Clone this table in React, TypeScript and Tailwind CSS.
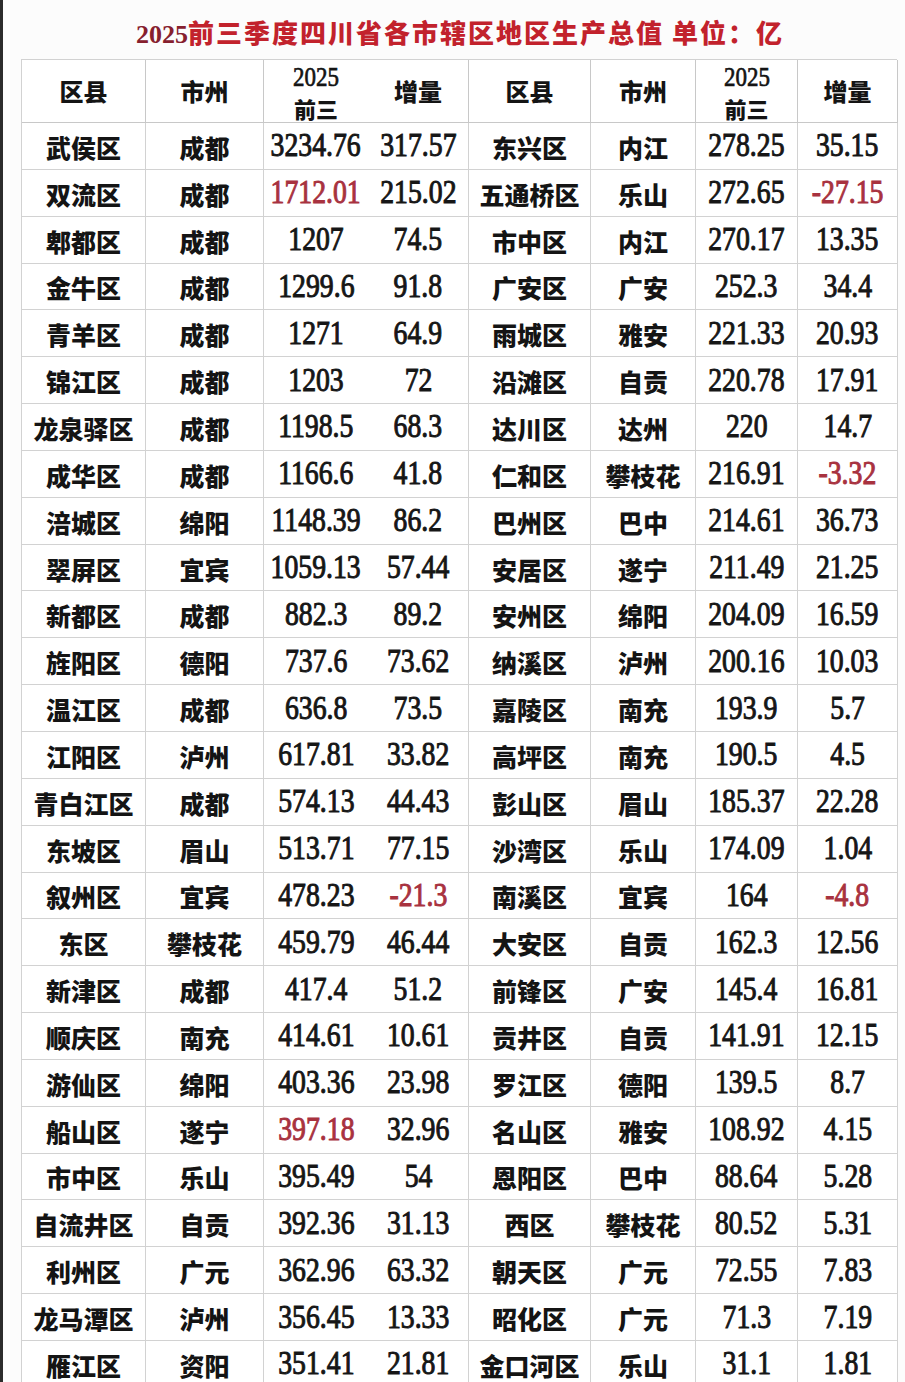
import React from "react";

type Row = [string, string, string, string, string, string, string, string];

const rows: Row[] = [
  ["武侯区", "成都", "3234.76", "317.57", "东兴区", "内江", "278.25", "35.15"],
  ["双流区", "成都", "1712.01", "215.02", "五通桥区", "乐山", "272.65", "-27.15"],
  ["郫都区", "成都", "1207", "74.5", "市中区", "内江", "270.17", "13.35"],
  ["金牛区", "成都", "1299.6", "91.8", "广安区", "广安", "252.3", "34.4"],
  ["青羊区", "成都", "1271", "64.9", "雨城区", "雅安", "221.33", "20.93"],
  ["锦江区", "成都", "1203", "72", "沿滩区", "自贡", "220.78", "17.91"],
  ["龙泉驿区", "成都", "1198.5", "68.3", "达川区", "达州", "220", "14.7"],
  ["成华区", "成都", "1166.6", "41.8", "仁和区", "攀枝花", "216.91", "-3.32"],
  ["涪城区", "绵阳", "1148.39", "86.2", "巴州区", "巴中", "214.61", "36.73"],
  ["翠屏区", "宜宾", "1059.13", "57.44", "安居区", "遂宁", "211.49", "21.25"],
  ["新都区", "成都", "882.3", "89.2", "安州区", "绵阳", "204.09", "16.59"],
  ["旌阳区", "德阳", "737.6", "73.62", "纳溪区", "泸州", "200.16", "10.03"],
  ["温江区", "成都", "636.8", "73.5", "嘉陵区", "南充", "193.9", "5.7"],
  ["江阳区", "泸州", "617.81", "33.82", "高坪区", "南充", "190.5", "4.5"],
  ["青白江区", "成都", "574.13", "44.43", "彭山区", "眉山", "185.37", "22.28"],
  ["东坡区", "眉山", "513.71", "77.15", "沙湾区", "乐山", "174.09", "1.04"],
  ["叙州区", "宜宾", "478.23", "-21.3", "南溪区", "宜宾", "164", "-4.8"],
  ["东区", "攀枝花", "459.79", "46.44", "大安区", "自贡", "162.3", "12.56"],
  ["新津区", "成都", "417.4", "51.2", "前锋区", "广安", "145.4", "16.81"],
  ["顺庆区", "南充", "414.61", "10.61", "贡井区", "自贡", "141.91", "12.15"],
  ["游仙区", "绵阳", "403.36", "23.98", "罗江区", "德阳", "139.5", "8.7"],
  ["船山区", "遂宁", "397.18", "32.96", "名山区", "雅安", "108.92", "4.15"],
  ["市中区", "乐山", "395.49", "54", "恩阳区", "巴中", "88.64", "5.28"],
  ["自流井区", "自贡", "392.36", "31.13", "西区", "攀枝花", "80.52", "5.31"],
  ["利州区", "广元", "362.96", "63.32", "朝天区", "广元", "72.55", "7.83"],
  ["龙马潭区", "泸州", "356.45", "13.33", "昭化区", "广元", "71.3", "7.19"],
  ["雁江区", "资阳", "351.41", "21.81", "金口河区", "乐山", "31.1", "1.81"],
];

const redCells = new Set(["1-2", "1-7", "7-7", "16-3", "16-7", "21-2"]);

const cjk = "font-['Noto_Sans_CJK_SC',sans-serif]";
const serif = "font-['Liberation_Serif','Noto_Sans_CJK_SC',serif]";

const borderR = [true, true, false, true, true, true, true, true];

function TextCell({ text, col }: { text: string; col: number }) {
  return (
    <div
      className={`flex h-[46.85px] items-center justify-center border-b border-[#d2d2d2] ${
        borderR[col] ? "border-r" : ""
      }`}
    >
      <span className={`${cjk} pt-[3px] text-[25px] font-black leading-none text-[#141414]`}>{text}</span>
    </div>
  );
}

function NumCell({ text, col, red }: { text: string; col: number; red: boolean }) {
  return (
    <div
      className={`flex h-[46.85px] items-center justify-center border-b border-[#d2d2d2] ${
        borderR[col] ? "border-r" : ""
      }`}
    >
      <span
        className={`${serif} inline-block scale-x-[0.84] text-[33px] leading-none [-webkit-text-stroke:1px_currentColor] ${
          red ? "text-[#a8323f]" : "text-[#161616]"
        }`}
      >
        {text}
      </span>
    </div>
  );
}

function HeadSimple({ text, col }: { text: string; col: number }) {
  return (
    <div
      className={`flex h-[63px] items-center justify-center border-b border-[#c8c8c8] ${
        borderR[col] ? "border-r" : ""
      }`}
    >
      <span className={`${cjk} text-[24px] font-black leading-none text-[#141414]`}>{text}</span>
    </div>
  );
}

function HeadYear({ col }: { col: number }) {
  return (
    <div
      className={`flex h-[63px] flex-col items-center justify-center gap-[6px] border-b border-[#c8c8c8] ${
        borderR[col] ? "border-r" : ""
      }`}
    >
      <span
        className={`${serif} inline-block scale-x-[0.85] text-[27px] leading-none text-[#141414] [-webkit-text-stroke:0.7px_currentColor]`}
      >
        2025
      </span>
      <span className={`${cjk} text-[22px] font-black leading-none text-[#141414]`}>前三</span>
    </div>
  );
}

export default function App() {
  return (
    <div className="flex min-h-[1382px] w-[905px] overflow-hidden bg-[#fcfcfc]">
      <div className="w-[3px] shrink-0 bg-[#2b2b2b]" />
      <div className="flex flex-1 flex-col">
        <div className="flex h-[59px] items-center justify-center pt-[8px] pl-[12px]">
          <h1 className={`${cjk} text-[26px] font-black leading-none tracking-[2px] text-[#c2222c]`}>
            <span className={`${serif} font-bold text-[#86202e] tracking-normal`}>2025</span>
            前三季度四川省各市辖区地区生产总值 单位：亿
          </h1>
        </div>
        <div className="ml-[18px] grid w-[876px] grid-cols-[124px_118px_104px_101px_122px_105px_102px_100px] border-l border-t border-[#d2d2d2] bg-white">
          <HeadSimple text="区县" col={0} />
          <HeadSimple text="市州" col={1} />
          <HeadYear col={2} />
          <HeadSimple text="增量" col={3} />
          <HeadSimple text="区县" col={4} />
          <HeadSimple text="市州" col={5} />
          <HeadYear col={6} />
          <HeadSimple text="增量" col={7} />
          {rows.map((r, i) => (
            <React.Fragment key={i}>
              <TextCell text={r[0]} col={0} />
              <TextCell text={r[1]} col={1} />
              <NumCell text={r[2]} col={2} red={redCells.has(`${i}-2`)} />
              <NumCell text={r[3]} col={3} red={redCells.has(`${i}-3`)} />
              <TextCell text={r[4]} col={4} />
              <TextCell text={r[5]} col={5} />
              <NumCell text={r[6]} col={6} red={redCells.has(`${i}-6`)} />
              <NumCell text={r[7]} col={7} red={redCells.has(`${i}-7`)} />
            </React.Fragment>
          ))}
        </div>
      </div>
    </div>
  );
}
